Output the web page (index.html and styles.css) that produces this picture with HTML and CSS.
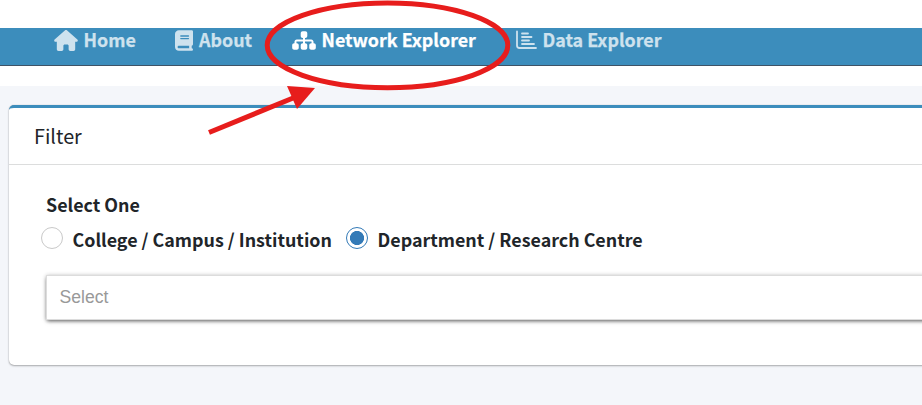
FILE: index.html
```
<!DOCTYPE html>
<html lang="en">
<head>
<meta charset="utf-8">
<title>Network Explorer</title>
<link rel="stylesheet" href="styles.css">
</head>
<body>
<header class="topbar">
  <nav class="nav">
    <a class="nav-item home"><svg class="icon wide" viewBox="0 0 576 512"><path d="M575.8 255.5c0 18-15 32.1-32 32.1h-32l.7 160.2c0 2.7-.2 5.4-.5 8.1V472c0 22.1-17.9 40-40 40H392c-22.1 0-40-17.9-40-40V384c0-17.7-14.3-32-32-32H256c-17.7 0-32 14.3-32 32v88c0 22.1-17.9 40-40 40H104c-22.1 0-40-17.9-40-40V287.6H32c-18 0-32-14-32-32.1c0-9 3-17 10-24L266.4 8c7-7 15-8 22-8s15 2 21 7L564.8 231.5c8 7 12 15 11 24z"/></svg><span>Home</span></a>
    <a class="nav-item about"><svg class="icon book" viewBox="0 0 448 512"><path d="M96 0C43 0 0 43 0 96V416c0 53 43 96 96 96H416c17.7 0 32-14.3 32-32s-14.3-32-32-32V384c17.7 0 32-14.3 32-32V32c0-17.7-14.3-32-32-32H96zm0 384H352v64H96c-17.7 0-32-14.3-32-32s14.3-32 32-32zm32-240c0-8.8 7.2-16 16-16H336c8.8 0 16 7.2 16 16s-7.2 16-16 16H144c-8.8 0-16-7.2-16-16zm16 48H336c8.8 0 16 7.2 16 16s-7.2 16-16 16H144c-8.8 0-16-7.2-16-16s7.2-16 16-16z"/></svg><span>About</span></a>
    <a class="nav-item network active"><svg class="icon wide" viewBox="0 0 576 512"><path d="M208 80c0-26.500 21.500-48 48-48h64c26.500 0 48 21.500 48 48v64c0 26.500-21.500 48-48 48h-8v40H464c30.900 0 56 25.100 56 56v32h8c26.500 0 48 21.500 48 48v64c0 26.500-21.500 48-48 48H464c-26.500 0-48-21.500-48-48V368c0-26.500 21.500-48 48-48h8V288c0-4.400-3.600-8-8-8H312v40h8c26.500 0 48 21.500 48 48v64c0 26.500-21.500 48-48 48H256c-26.500 0-48-21.500-48-48V368c0-26.500 21.500-48 48-48h8V280H112c-4.400 0-8 3.600-8 8v32h8c26.500 0 48 21.500 48 48v64c0 26.500-21.500 48-48 48H48c-26.500 0-48-21.500-48-48V368c0-26.500 21.500-48 48-48h8V288c0-30.900 25.100-56 56-56H264V192h-8c-26.500 0-48-21.500-48-48V80z"/></svg><span>Network Explorer</span></a>
    <a class="nav-item data"><svg class="icon chart" viewBox="0 0 21 21"><path d="M1 1.500V15.500Q1 18 3.500 18H20M6 3.500H12M6 7H15.500M6 10.500H13M6 14H18"/></svg><span>Data Explorer</span></a>
  </nav>
</header>
<main class="content">
  <section class="card">
    <h3 class="card-title"><span>Filter</span></h3>
    <div class="card-body">
      <div class="label">Select One</div>
      <div class="radios">
        <label class="radio"><i class="dot"></i><span>College / Campus / Institution</span></label>
        <label class="radio"><i class="dot checked"></i><span>Department / Research Centre</span></label>
      </div>
      <div class="select">Select</div>
    </div>
  </section>
</main>
<svg class="annotation" viewBox="0 0 922 405">
  <ellipse cx="387.500" cy="45.300" rx="120.300" ry="42.400"/>
  <path class="shaft" d="M209 132.500L298 96"/>
  <path class="head" d="M287 86L315 88L297 109Z"/>
</svg>
</body>
</html>
```
FILE: styles.css
```
* { box-sizing: border-box; }
body {
  margin: 0;
  width: 922px;
  height: 405px;
  overflow: hidden;
  background: #f4f6fa;
  color: #212529;
  font-family: "Noto Sans CJK SC", sans-serif;
  font-size: 17.87px;
}
.topbar { height: 86px; padding-top: 28px; background: #fff; }
.nav {
  display: flex;
  height: 38px;
  padding-left: 54px;
  background: #3c8dbc;
  border-bottom: 1px solid #3f5366;
}
.nav-item {
  display: flex;
  height: 24px;
  align-items: center;
  color: #cee2ee;
  font-weight: 700;
  line-height: 24px;
  white-space: nowrap;
  -webkit-text-stroke: .25px currentColor;
}
.nav-item span { margin-top: -2px; }
.home { width: 121px; }
.about { width: 117px; }
.network { width: 224px; }
.active { color: #fff; }
.icon { flex: none; height: 21px; fill: currentColor; }
.wide { width: 24px; margin-right: 5.5px; }
.book { width: 18px; margin-right: 6px; }
.chart { width: 21px; margin-right: 5.5px; fill: none; stroke: currentColor; stroke-width: 1.8; stroke-linecap: round; }
.content { padding: 19px 0 0 9px; }
.card {
  width: 930px;
  height: 260px;
  background: #fff;
  border-top: 3px solid #3c8dbc;
  border-radius: 5px;
  box-shadow: 0 0 1px rgba(0,0,0,.25), 0 1px 2px rgba(0,0,0,.3);
}
.card-title {
  height: 57px;
  margin: 0;
  padding: 15px 25px;
  border-bottom: 1px solid #dcdddd;
  font-size: 19.8px;
  font-weight: 400;
  line-height: 26px;
}
.card-body { padding: 26px 0 0 37px; }
.label { height: 28px; font-weight: 700; line-height: 26px; }
.radios { display: flex; height: 43px; margin-left: -5px; }
.radio { display: flex; width: 305px; height: 40px; align-items: center; font-weight: 700; white-space: nowrap; }
.dot { flex: none; width: 22px; height: 22px; margin: -2px 9.5px 0 0; border: 1px solid #c9c9c9; border-radius: 50%; }
.checked { border-color: #337ab7; background: radial-gradient(circle, #337ab7 6.7px, #fff 7.4px); }
.select {
  height: 45px;
  margin-top: 13px;
  padding-left: 12.5px;
  border: 1px solid #dcdcdc;
  box-shadow: 0 2px 4px -1px rgba(0,0,0,.6), 0 0 4px rgba(0,0,0,.18);
  color: #999;
  font: 17.6px/42px "Liberation Sans", sans-serif;
}
.annotation { position: absolute; top: 0; left: 0; width: 922px; height: 405px; fill: none; stroke: #e71d1c; stroke-width: 5; pointer-events: none; }
.annotation .head { fill: #e71d1c; stroke: none; }
```
